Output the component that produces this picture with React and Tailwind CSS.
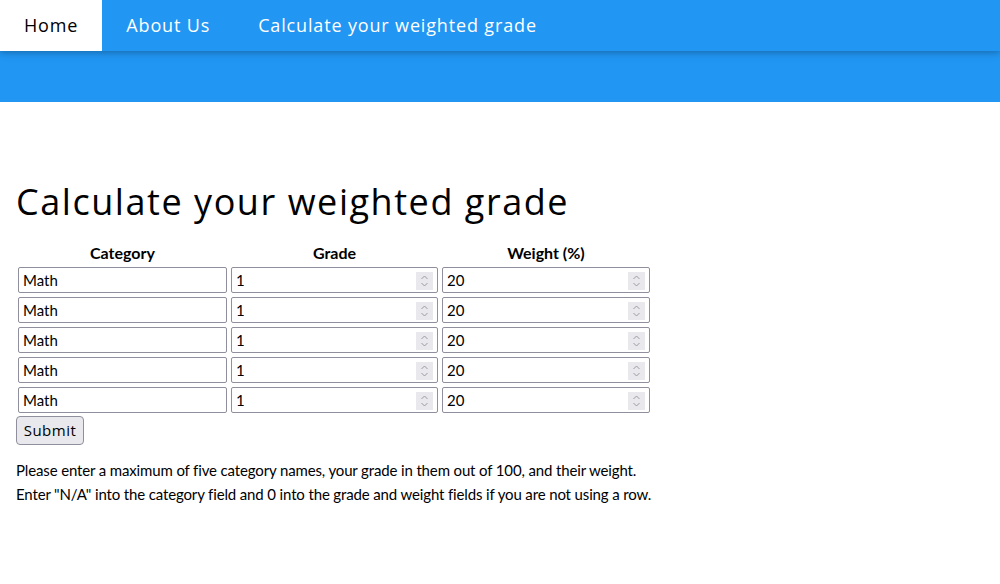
import React from "react";

function Spinner() {
  return (
    <div className="absolute right-[4px] top-[4px] w-[17px] h-[18px] bg-[#e9e9ed] flex items-center justify-center">
      <svg width="9" height="14" viewBox="0 0 9 14" fill="none" stroke="#9a9aa3" strokeWidth="1">
        <path d="M1.5 5 L4.5 2 L7.5 5" />
        <path d="M1.5 9 L4.5 12 L7.5 9" />
      </svg>
    </div>
  );
}

function Field({ value, spin }) {
  return (
    <div className="relative h-[26px] border border-[#8f8f9d] rounded-[2px] bg-white flex items-center pl-[4px] text-[15px] text-black" style={{ fontFamily: "Lato, 'Liberation Sans', sans-serif" }}>
      <span>{value}</span>
      {spin && <Spinner />}
    </div>
  );
}

export default function App() {
  const rows = [0, 1, 2, 3, 4];
  const mont = { fontFamily: "'Open Sans', 'Noto Sans', sans-serif" };
  return (
    <div className="w-[1000px] h-[584px] bg-white overflow-hidden" style={{ fontFamily: "Lato, sans-serif" }}>
      <div className="bg-[#2196f3] h-[102px]">
        <div className="flex h-[51px] bg-[#2196f3] shadow-[0_2px_5px_rgba(0,0,0,0.16),0_2px_10px_rgba(0,0,0,0.12)] relative z-10 text-[18px] tracking-[0.85px]" style={mont}>
          <div className="bg-white text-black px-6 flex items-center">Home</div>
          <div className="text-white px-6 flex items-center">About Us</div>
          <div className="text-white px-6 flex items-center">Calculate your weighted grade</div>
        </div>
      </div>
      <div className="px-4">
        <h1 className="mt-[78px] text-[36px] leading-[43px] tracking-[1.55px] text-black" style={mont}>Calculate your weighted grade</h1>
        <div className="mt-[20px] ml-[2px] grid grid-cols-[209px_207px_208px] gap-x-[4px] gap-y-[4px]">
          <div className="h-[20px] leading-[20px] text-center font-bold text-[16px]">Category</div>
          <div className="h-[20px] leading-[20px] text-center font-bold text-[16px]">Grade</div>
          <div className="h-[20px] leading-[20px] text-center font-bold text-[16px]">Weight (%)</div>
          {rows.map((r) => (
            <React.Fragment key={r}>
              <Field value="Math" />
              <Field value="1" spin />
              <Field value="20" spin />
            </React.Fragment>
          ))}
        </div>
        <button className="mt-[3px] h-[29px] w-[68px] bg-[#e9e9ed] border border-[#8f8f9d] rounded-[4px] text-[15px] tracking-[0.5px] text-black" style={mont}>Submit</button>
        <p className="mt-[13px] text-[15px] leading-[24px] tracking-[-0.14px] text-black">
          Please enter a maximum of five category names, your grade in them out of 100, and their weight.
          <br />
          Enter "N/A" into the category field and 0 into the grade and weight fields if you are not using a row.
        </p>
      </div>
    </div>
  );
}
